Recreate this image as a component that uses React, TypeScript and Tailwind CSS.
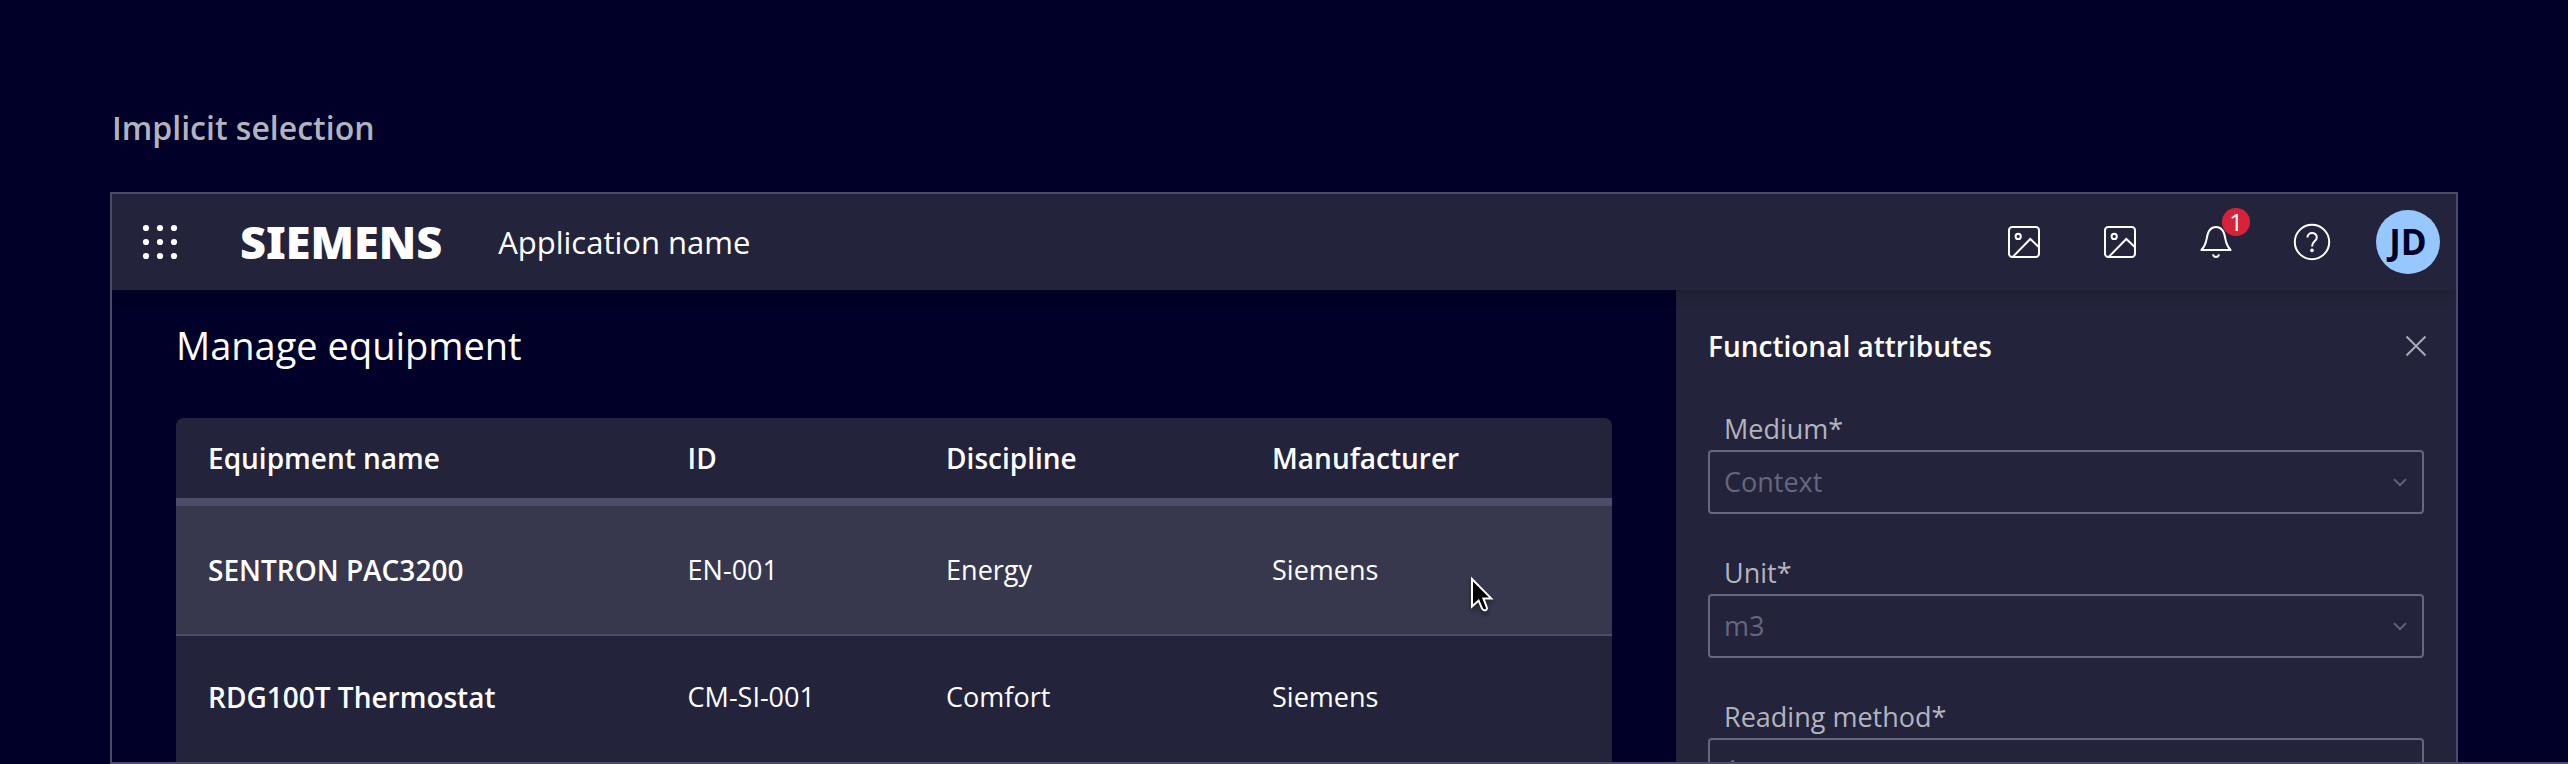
import type { ReactNode } from "react";

type Equipment = { name: string; id: string; discipline: string; manufacturer: string };

const equipment: Equipment[] = [
  { name: "SENTRON PAC3200", id: "EN-001", discipline: "Energy", manufacturer: "Siemens" },
  { name: "RDG100T Thermostat", id: "CM-SI-001", discipline: "Comfort", manufacturer: "Siemens" },
];

const fields = [
  { id: "medium", label: "Medium", value: "Context" },
  { id: "unit", label: "Unit", value: "m3" },
  { id: "reading-method", label: "Reading method", value: "A" },
];

function Icon({ children }: { children: ReactNode }) {
  return (
    <svg viewBox="0 0 48 48" className="size-12" fill="none" stroke="currentColor" strokeWidth="2" aria-hidden="true">
      {children}
    </svg>
  );
}

function AppsIcon() {
  return (
    <Icon>
      <g fill="currentColor" stroke="none">
        {[10, 24, 38].map((y) => [10, 24, 38].map((x) => <circle key={`${x}-${y}`} cx={x} cy={y} r="3.1" />))}
      </g>
    </Icon>
  );
}

function ImageIcon() {
  return (
    <Icon>
      <rect x="9" y="9" width="30" height="30" rx="3.2" />
      <circle cx="18.2" cy="18.4" r="2.6" />
      <path d="M13 38.6 L30.3 21 L39 29.2" />
    </Icon>
  );
}

function BellIcon() {
  return (
    <Icon>
      <path d="M9.4 32 C12.6 28.6 13.8 25.2 14.6 21 C15.6 13.6 18 9 24 9 C30 9 32.4 13.6 33.4 21 C34.2 25.2 35.4 28.6 38.6 32 Z" strokeLinejoin="round" />
      <path d="M21 36.4 C21.6 39.8 26.4 39.8 27 36.4" />
    </Icon>
  );
}

function HelpIcon() {
  return (
    <Icon>
      <circle cx="24" cy="24" r="17.2" />
      <path d="M19.4 19.6 C19.4 13.6 28.8 13.6 28.8 19.4 C28.8 23 24 23 24 28.4" />
      <circle cx="24" cy="32.4" r="1.8" fill="currentColor" stroke="none" />
    </Icon>
  );
}

function HeaderButton({ label, children }: { label: string; children: ReactNode }) {
  return (
    <button type="button" aria-label={label} className="relative flex size-16 items-center justify-center">
      {children}
    </button>
  );
}

function Header() {
  return (
    <header className="relative z-10 flex h-24 shrink-0 items-center bg-[#23233c] pr-4 pl-6 text-white shadow-[0_4px_12px_rgba(0,0,0,0.2)]">
      <button type="button" aria-label="Applications">
        <AppsIcon />
      </button>
      <a href="#" className="ml-14 pb-0.5 font-['Noto_Sans',sans-serif] text-[45px] leading-none font-black">
        SIEMENS
      </a>
      <span className="ml-14 text-[31px]">Application name</span>
      <nav className="ml-auto flex items-center gap-8">
        <HeaderButton label="Image">
          <ImageIcon />
        </HeaderButton>
        <HeaderButton label="Gallery">
          <ImageIcon />
        </HeaderButton>
        <HeaderButton label="Notifications">
          <BellIcon />
          <span className="absolute -top-0.5 -right-0.5 flex size-7 items-center justify-center rounded-full bg-[#d72339] text-2xl leading-none">
            1
          </span>
        </HeaderButton>
        <HeaderButton label="Help">
          <HelpIcon />
        </HeaderButton>
        <button
          type="button"
          className="flex size-16 items-center justify-center rounded-full bg-[#97c7ff] pb-0.5 text-[35px] leading-none font-bold text-[#000028]"
        >
          JD
        </button>
      </nav>
    </header>
  );
}

function Pointer() {
  return (
    <svg
      viewBox="0 0 28 40"
      className="absolute top-[158px] right-[114px] h-10 w-7 drop-shadow-[0_3px_2px_rgba(0,0,0,0.4)]"
      aria-hidden="true"
    >
      <path
        d="M2 3 V30.6 L8.6 24.6 L12.2 32.8 Q14 35.4 16.4 33.6 Q17.4 32.8 16.8 31.4 L13.4 22.4 H21.2 Z"
        fill="#000"
        stroke="#fff"
        strokeWidth="2"
      />
    </svg>
  );
}

function EquipmentTable() {
  return (
    <div className="relative overflow-hidden rounded-t-lg bg-[#23233c]">
      <table className="w-full table-fixed border-separate border-spacing-0 text-left text-[27px] text-white">
        <thead>
          <tr className="h-22 text-[28px] *:border-b-8 *:border-[#4c4c68] *:pl-8 *:font-semibold">
            <th className="w-[33.4%]">Equipment name</th>
            <th className="w-[18%]">ID</th>
            <th className="w-[22.7%]">Discipline</th>
            <th>Manufacturer</th>
          </tr>
        </thead>
        <tbody>
          {equipment.map((item) => (
            <tr
              key={item.id}
              className="h-32 *:border-[#4c4c68] *:pl-8 first:bg-[#37374d] not-first:*:border-t-2 not-first:*:pb-1"
            >
              <th scope="row" className="text-[28px] font-semibold">
                {item.name}
              </th>
              <td>{item.id}</td>
              <td>{item.discipline}</td>
              <td>{item.manufacturer}</td>
            </tr>
          ))}
        </tbody>
      </table>
      <Pointer />
    </div>
  );
}

function AttributesPanel() {
  return (
    <aside className="flex w-[780px] shrink-0 flex-col gap-[38px] bg-[#23233c] p-8">
      <div className="flex h-12 shrink-0 items-center justify-between">
        <h2 className="text-[28px] font-semibold text-white">Functional attributes</h2>
        <button type="button" aria-label="Close" className="-mr-4 flex size-12 items-center justify-center text-[#a9a9b6]">
          <svg viewBox="0 0 24 24" className="size-6" fill="none" stroke="currentColor" strokeWidth="2" aria-hidden="true">
            <path d="M2.5 2.5 L21.5 21.5 M21.5 2.5 L2.5 21.5" />
          </svg>
        </button>
      </div>
      {fields.map((field) => (
        <div key={field.id} className="flex shrink-0 flex-col">
          <label htmlFor={field.id} className="pl-4 text-[27px] leading-[42px] text-[#b3b3be]">
            {field.label}*
          </label>
          <div className="relative">
            <select
              id={field.id}
              className="h-16 w-full appearance-none rounded-sm border-2 border-[#66667e] bg-transparent pr-12 pl-3.5 text-[27px] text-[#66667e]"
            >
              <option>{field.value}</option>
            </select>
            <svg
              viewBox="0 0 16 16"
              className="pointer-events-none absolute top-6 right-4 size-4 text-[#66667e]"
              fill="none"
              stroke="currentColor"
              strokeWidth="1.8"
              aria-hidden="true"
            >
              <path d="M2 5.2 L8 11.2 L14 5.2" />
            </svg>
          </div>
        </div>
      ))}
    </aside>
  );
}

export default function App() {
  return (
    <div className="flex h-screen flex-col overflow-hidden bg-[#000028] pt-[108px] pl-[110px] font-['Open_Sans','Noto_Sans',sans-serif]">
      <h2 className="mb-11 pl-0.5 text-[32px] leading-10 font-semibold text-[#b3b3be]">Implicit selection</h2>
      <div className="flex min-h-0 flex-1 flex-col border-b-2 border-[#4c4c68]">
        <section className="mr-[110px] flex min-h-0 flex-1 flex-col overflow-hidden border-x-2 border-t-2 border-[#4c4c68]">
          <Header />
          <div className="flex min-h-0 flex-1">
            <main className="min-w-0 flex-1 px-16 pt-[30px]">
              <h1 className="mb-12 text-[38px] leading-[50px] text-white">Manage equipment</h1>
              <EquipmentTable />
            </main>
            <AttributesPanel />
          </div>
        </section>
      </div>
    </div>
  );
}
